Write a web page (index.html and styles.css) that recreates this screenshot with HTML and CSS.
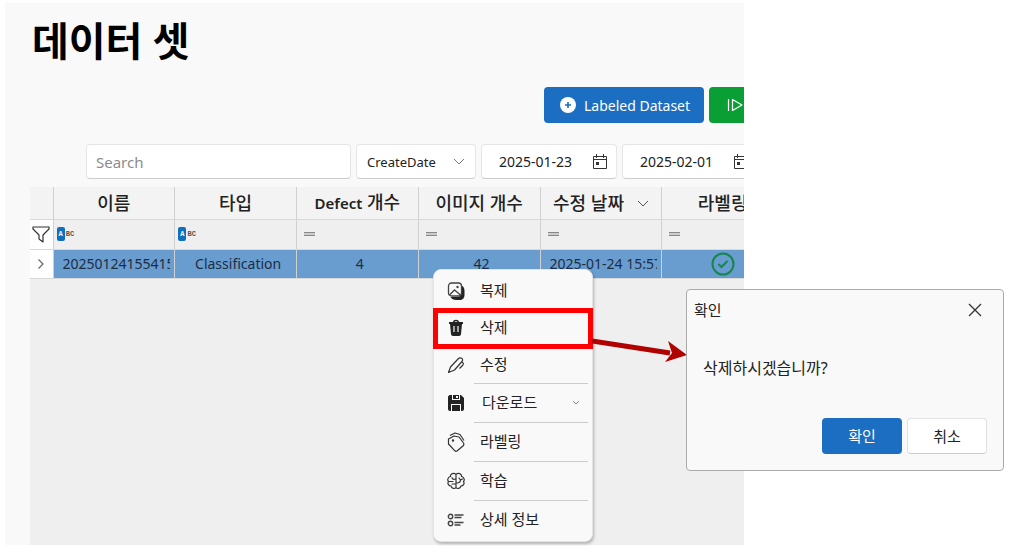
FILE: index.html
```html
<!DOCTYPE html>
<html lang="ko">
<head>
    <meta charset="UTF-8">
    <meta name="viewport" content="width=device-width, initial-scale=1.0">
    <title>데이터 셋</title>
    <link rel="stylesheet" href="styles.css">
</head>
<body>
    <main class="panel">
        <div class="content">
            <h1>데이터 셋</h1>

            <div class="actions">
                <button class="btn btn-primary" type="button">
                    <svg width="16" height="16" viewBox="0 0 16 16"><circle cx="8" cy="8" r="8" fill="#fff"/><path d="M8 5v6M5 8h6" stroke="#1b6ec2" stroke-width="1.6"/></svg>
                    Labeled Dataset
                </button>
                <button class="btn btn-run" type="button" aria-label="실행">
                    <svg width="18" height="16" viewBox="0 0 18 16" fill="none" stroke="#fff" stroke-width="1.2" stroke-linejoin="round"><path d="M1.5 2v12M5.500 2.500v11L15 8z"/></svg>
                </button>
            </div>

            <div class="toolbar">
                <input class="field search" type="text" placeholder="Search" aria-label="Search">
                <div class="field select-field">
                    <select aria-label="검색 기준">
                        <option>CreateDate</option>
                    </select>
                    <svg width="12" height="8" viewBox="0 0 12 8" fill="none" stroke="#777"><path d="M1 1l5 5 5-5"/></svg>
                </div>
                <div class="field date-field">
                    <input type="text" value="2025-01-23" aria-label="시작 날짜">
                    <svg width="16" height="16" viewBox="0 0 16 16" fill="none" stroke="#333"><path d="M1.500 2.500h13v12h-13zM1.500 5.500h13M4.500 0v4M11.500 0v4"/><path d="M4 8h3v3H4z" fill="#333" stroke="none"/></svg>
                </div>
                <div class="field date-field">
                    <input type="text" value="2025-02-01" aria-label="종료 날짜">
                    <svg width="16" height="16" viewBox="0 0 16 16" fill="none" stroke="#333"><path d="M1.500 2.500h13v12h-13zM1.500 5.500h13M4.500 0v4M11.500 0v4"/><path d="M4 8h3v3H4z" fill="#333" stroke="none"/></svg>
                </div>
            </div>

            <div class="grid">
                <table>
                    <thead>
                        <tr class="head">
                            <th class="side"></th>
                            <th>이름</th>
                            <th>타입</th>
                            <th><span class="latin">Defect</span> 개수</th>
                            <th>이미지 개수</th>
                            <th class="sorted">수정 날짜 <svg width="12" height="8" viewBox="0 0 12 8" fill="none" stroke="#555"><path d="M1 1l5 5 5-5"/></svg></th>
                            <th>라벨링</th>
                        </tr>
                        <tr class="filter">
                            <td class="side"><svg width="18" height="17" viewBox="0 0 18 17" fill="none" stroke="#333" stroke-width="1.2" stroke-linejoin="round"><path d="M1 1h16v2l-6 6v7l-4-3V9L1 3z"/></svg></td>
                            <td><span class="abc"><b>A</b>BC</span></td>
                            <td><span class="abc"><b>A</b>BC</span></td>
                            <td><span class="equals"></span></td>
                            <td><span class="equals"></span></td>
                            <td><span class="equals"></span></td>
                            <td><span class="equals"></span></td>
                        </tr>
                    </thead>
                    <tbody>
                        <tr class="row">
                            <td class="side"><svg width="8" height="12" viewBox="0 0 8 12" fill="none" stroke="#666" stroke-width="1.2"><path d="M1.500 1.500L6 6l-4.500 4.500"/></svg></td>
                            <td><span class="cell">20250124155415</span></td>
                            <td><span class="cell">Classification</span></td>
                            <td><span class="cell">4</span></td>
                            <td><span class="cell">42</span></td>
                            <td><span class="cell">2025-01-24 15:57</span></td>
                            <td class="state"><svg width="24" height="24" viewBox="0 0 24 24" fill="none" stroke="#17864a" stroke-width="2"><circle cx="12" cy="12" r="10.500"/><path d="M7.500 12l3 3 6-6"/></svg></td>
                        </tr>
                    </tbody>
                </table>
            </div>
        </div>
    </main>

    <!-- context menu -->
    <div class="menu">
        <button class="menu-item" type="button">
            <svg width="17" height="18" viewBox="0 0 17 18"><path d="M13 3c3 1 4 3 4 6v4c0 3-2 5-5 5H9c-3 0-5-1-6-3h7c2 0 3-1 3-3z" fill="#222"/><rect x="1" y="1" width="13" height="13" rx="3" fill="#f9f9f9" stroke="#444" stroke-width="1.3"/><path d="M2 13l5-5 6 5" fill="none" stroke="#444" stroke-width="1.3"/><circle cx="10" cy="5" r="1.200" fill="#444"/></svg>
            <span>복제</span>
        </button>
        <button class="menu-item marked" type="button">
            <svg width="16" height="18" viewBox="0 0 16 18"><path d="M1 3h4c0-3 6-3 6 0h4v2h-1l-1 10c0 1-1 2-2 2H5c-1 0-2-1-2-2L2 5H1z" fill="#222"/><path d="M6.500 3h3c0-1-3-1-3 0z" fill="#f9f9f9"/><path d="M6 7v6M10 7v6" stroke="#f9f9f9" stroke-width="1.200"/></svg>
            <span>삭제</span>
        </button>
        <button class="menu-item" type="button">
            <svg width="17" height="18" viewBox="0 0 17 18" fill="none" stroke="#333" stroke-width="1.200" stroke-linejoin="round"><path d="M1 16.500l2-5.500L10.500 3c2.500-2.500 6-.5 4 2.500L7 14zM14.500 6c2 1 1.500 2.500.5 3.500l-3 3"/></svg>
            <span>수정</span>
        </button>
        <hr>
        <button class="menu-item sub" type="button">
            <svg width="16" height="16" viewBox="0 0 16 16"><path d="M2 0h11l3 3v11c0 1-1 2-2 2H2c-1 0-2-1-2-2V2c0-1 1-2 2-2z" fill="#222"/><path d="M4 0h1v4h6V0h1v5H4zM3 9h10v7h-1v-6H4v6H3z" fill="#f9f9f9"/><path d="M8 1h2v2H8z" fill="#f9f9f9"/></svg>
            <span>다운로드</span>
            <svg class="more" width="8" height="6" viewBox="0 0 8 6" fill="none" stroke="#888"><path d="M1 1l3 3 3-3"/></svg>
        </button>
        <hr>
        <button class="menu-item" type="button">
            <svg width="18" height="20" viewBox="0 0 18 20" fill="none" stroke="#333" stroke-width="1.200" stroke-linejoin="round"><path d="M1.500 7L7 4l5 1 4.500 6c.5 1 .5 1.500 0 2.500L10 19c-1 .6-1.600.4-2.300-.4L1.500 12zM3 3.500L8 1l5 1.500 4 6"/><circle cx="6" cy="8.500" r=".6"/></svg>
            <span>라벨링</span>
        </button>
        <hr>
        <button class="menu-item" type="button">
            <svg width="18" height="18" viewBox="0 0 18 18" fill="none" stroke="#333" stroke-width="1.200" stroke-linecap="round"><path d="M9 2.500C7 0 3 2 3.500 4.500 1 5 0 8 1.500 9.500 0 12 2 14 4 14c1 3 4 3 5 1.500zM9 2.500C11 0 15 2 14.500 4.500 17 5 18 8 16.500 9.500 18 12 16 14 14 14c-1 3-4 3-5 1.500M2 9.500h4M5 5.500c0 2 2 2 3.500 1.500M5 12h3.500M9.500 11c3 0 4-1 4-3M12 6l1.500 2 2-1"/></svg>
            <span>학습</span>
        </button>
        <hr>
        <button class="menu-item" type="button">
            <svg width="17" height="14" viewBox="0 0 17 14" fill="none" stroke="#444" stroke-width="1.400"><circle cx="3" cy="3.500" r="2.200"/><circle cx="3" cy="10.500" r="2.200"/><path d="M7 2h9M7 4.500h7M7 9.500h9M7 12h6"/></svg>
            <span>상세 정보</span>
        </button>
    </div>

    <svg class="arrow" width="96" height="30" viewBox="0 0 96 30"><path d="M0 6l78 12" stroke="#b00000" stroke-width="5"/><path d="M95 20L76 6l4 12-7 9z" fill="#b00000"/></svg>

    <!-- delete confirmation -->
    <section class="dialog" role="dialog" aria-labelledby="dialog-title">
        <header class="dialog-head">
            <h2 id="dialog-title">확인</h2>
            <button class="close" type="button" aria-label="닫기">
                <svg width="14" height="14" viewBox="0 0 14 14" stroke="#333" stroke-width="1.300"><path d="M1 1l12 12M13 1L1 13"/></svg>
            </button>
        </header>
        <p>삭제하시겠습니까?</p>
        <footer class="dialog-foot">
            <button class="btn btn-primary" type="button">확인</button>
            <button class="btn btn-plain" type="button">취소</button>
        </footer>
    </section>
</body>
</html>
```
FILE: styles.css
```css
/* --- General --- */
* {
    margin: 0;
    padding: 0;
    box-sizing: border-box;
}

body {
    min-height: 100vh;
    padding: 3px 270px 5px 5px;
    background: #fff;
    color: #222;
    font-family: "Noto Sans", "Noto Sans CJK KR", sans-serif;
    font-size: 14px;
    display: flex;
}

button,
input,
select {
    font: inherit;
    color: inherit;
    border: 0;
    background: none;
    outline: none;
}

svg {
    display: block;
    flex-shrink: 0;
}

/* --- Dataset panel --- */
.panel {
    flex: 1;
    min-width: 0;
    display: flex;
    background: #f9f9f9;
    overflow: hidden;
}

/* the grid runs on past the right edge of the panel */
.content {
    flex: 0 0 calc(100% + 40px);
    padding: 8px 0 0 25px;
    display: flex;
    flex-direction: column;
}

h1 {
    padding-left: 2px;
    color: #000;
    font-size: 40px;
    font-weight: 700;
    line-height: 60px;
}

.actions {
    display: flex;
    justify-content: flex-end;
    gap: 5px;
    margin-top: 16px;
}

.btn {
    height: 36px;
    border-radius: 4px;
    display: flex;
    align-items: center;
    justify-content: center;
    gap: 8px;
}

.btn-primary {
    background: #1b6ec2;
    color: #fff;
}

.actions .btn-primary {
    width: 160px;
    padding-left: 2px;
}

.btn-run {
    width: 75px;
    padding-left: 18px;
    justify-content: flex-start;
    background: #0a9f35;
}

.btn-plain {
    background: #fff;
    border: 1px solid #e2e2e2;
    border-bottom-color: #ccc;
}

/* --- Toolbar --- */
.toolbar {
    display: flex;
    gap: 5px;
    margin: 21px 26px 8px 56px;
}

.field {
    height: 35px;
    background: #fff;
    border: 1px solid #e6e6e6;
    border-bottom-color: #ccc;
    border-radius: 4px;
    display: flex;
    align-items: center;
}

.search {
    flex: 1;
    min-width: 0;
    padding: 0 9px;
    font-size: 15px;
}

.search::placeholder {
    color: #8c8c8c;
}

.select-field {
    width: 120px;
    padding: 0 10px;
}

.select-field select {
    flex: 1;
    min-width: 0;
    appearance: none;
    font-size: 13px;
}

.date-field {
    width: 136px;
    padding: 0 8px 0 17px;
}

.date-field input {
    flex: 1;
    min-width: 0;
}

/* --- Grid --- */
.grid {
    flex: 1;
    background: #efefef;
}

table {
    width: 100%;
    table-layout: fixed;
    border-collapse: collapse;
}

th,
td {
    border-right: 1px solid #d0d0d0;
    border-bottom: 1px solid #d8d8d8;
    white-space: nowrap;
    vertical-align: middle;
}

.side {
    width: 23px;
}

.side svg {
    margin: 0 auto;
}

.head th {
    height: 32px;
    background: #f3f3f3;
    font-size: 18px;
    font-weight: 500;
    line-height: 24px;
}

.latin {
    font-size: 15px;
    font-weight: 600;
}

.sorted svg {
    display: inline-block;
    margin: 0 0 2px 8px;
}

.filter td {
    height: 30px;
    padding-left: 3px;
}

.filter .side,
.row .side {
    padding: 0;
    background: #fff;
}

.abc {
    display: flex;
    align-items: center;
    gap: 1px;
    color: #555;
    font: bold 7px "Liberation Mono", monospace;
}

.abc b {
    padding: 3px 2px;
    border-radius: 2px;
    background: #0f6fbd;
    color: #fff;
}

.equals {
    display: block;
    width: 11px;
    height: 4px;
    margin-left: 4px;
    background: #ccc;
    border: solid #888;
    border-width: 1px 0;
}

.row td {
    height: 29px;
    background: #699ccf;
    color: #1c2e45;
    text-align: center;
}

.cell {
    display: block;
    margin: 0 4px 0 9px;
    overflow: hidden;
    line-height: 20px;
}

.state svg {
    margin: 0 auto;
}

/* --- Context menu --- */
.menu {
    position: absolute;
    left: 433px;
    top: 269px;
    width: 160px;
    padding: 2px 4px;
    background: #f9f9f9;
    border: 1px solid #e4e4e4;
    border-radius: 8px;
    box-shadow: 1px 2px 3px rgba(0, 0, 0, 0.25);
}

.menu-item {
    position: relative;
    width: 100%;
    height: 37px;
    padding-left: 9px;
    display: flex;
    align-items: center;
    font-size: 15px;
    text-align: left;
}

.menu-item > svg:first-child {
    width: 18px;
}

.menu-item span {
    flex: 1;
    margin-left: 15px;
    padding-bottom: 3px;
}

.menu hr {
    margin-left: 36px;
    border: 0;
    border-top: 1px solid #ccc;
}

.menu hr ~ .menu-item {
    height: 38px;
}

.menu-item.sub span {
    margin-left: 17px;
}

.more {
    margin-right: 8px;
}

/* red frame round the delete entry */
.marked::after {
    content: "";
    position: absolute;
    inset: -1px -5px -3px;
    border: 5px solid #fe0000;
}

.arrow {
    position: absolute;
    left: 592px;
    top: 335px;
}

/* --- Confirm dialog --- */
.dialog {
    position: absolute;
    left: 686px;
    top: 289px;
    width: 318px;
    background: #f9f9f9;
    border: 1px solid #aaa;
    border-radius: 4px;
    font-size: 15px;
}

.dialog-head {
    height: 40px;
    padding: 0 20px 0 7px;
    display: flex;
    align-items: center;
    justify-content: space-between;
}

.dialog h2 {
    padding-bottom: 2px;
    font-size: 15px;
    font-weight: 400;
}

.close {
    padding: 1px;
}

.dialog p {
    padding: 26px 16px 38px;
    font-size: 16px;
    line-height: 24px;
}

.dialog-foot {
    display: flex;
    justify-content: flex-end;
    gap: 5px;
    padding: 0 16px 16px;
}

.dialog-foot .btn {
    width: 80px;
    padding-bottom: 2px;
}
```
